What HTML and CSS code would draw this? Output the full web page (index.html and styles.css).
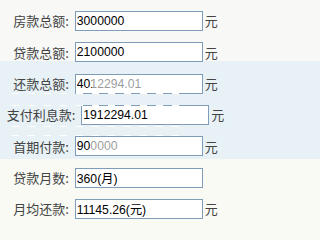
FILE: index.html
```html
<!DOCTYPE html>
<html lang="zh">
<head>
<meta charset="utf-8">
<link rel="stylesheet" href="styles.css">
</head>
<body>
<div class="calc">
  <div class="row"><span class="label">房款总额:</span><input class="field" value="3000000"><span class="unit">元</span></div>
  <div class="row"><span class="label">贷款总额:</span><input class="field" value="2100000"><span class="unit">元</span></div>
  <div class="row"><span class="label">还款总额:</span><input class="field" value="4012294.01"><span class="unit">元</span></div>
  <div class="row"><span class="label">支付利息款:</span><input class="field" value="1912294.01"><span class="unit">元</span></div>
  <div class="row"><span class="label">首期付款:</span><input class="field" value="900000"><span class="unit">元</span></div>
  <div class="row"><span class="label">贷款月数:</span><input class="field" value="360(月)"><span class="unit hidden">元</span></div>
  <div class="row"><span class="label">月均还款:</span><input class="field" value="11145.26(元)"><span class="unit">元</span></div>
  <div class="watermark">
    <div class="dash d1"></div>
    <div class="dash d2"></div>
    <div class="dash d3"></div>
    <div class="dash d4"></div>
    <div class="veil v1"></div>
    <div class="veil v2"></div>
  </div>
</div>
</body>
</html>
```
FILE: styles.css
```css
html, body {
  margin: 0;
  padding: 0;
}
html {
  background: linear-gradient(to bottom, #f8f8f7 0, #f8f8f7 61px, #e8f2f6 61px, #e8f2f6 159px, #fafaf4 159px);
  background-repeat: no-repeat;
  min-height: 100%;
}
body {
  overflow: hidden;
}
.calc {
  position: relative;
  width: 231px;
  height: 229px;
  padding-top: 5.3px;
  box-sizing: border-box;
}
.row {
  display: flex;
  justify-content: center;
  align-items: center;
  height: 31.33px;
}
.label {
  font-family: "Noto Sans CJK SC", "Noto Sans", sans-serif;
  font-size: 13px;
  color: #444;
  white-space: nowrap;
}
.field {
  box-sizing: border-box;
  width: 128px;
  height: 20px;
  margin: 0 2px 0 6px;
  padding: 0 1px;
  border: 1px solid #7f9db9;
  background: #fff;
  font-family: "Liberation Sans", Arial, "Noto Sans CJK SC", sans-serif;
  font-size: 12.2px;
  color: #000;
  outline: none;
}
.unit {
  font-family: "Noto Sans CJK SC", sans-serif;
  font-size: 13px;
  color: #444;
}
.hidden {
  visibility: hidden;
}
.watermark {
  position: absolute;
  left: 0;
  top: 0;
  width: 231px;
  height: 229px;
  pointer-events: none;
}
.dash {
  position: absolute;
  left: 12px;
  width: 170px;
  height: 1px;
  background: repeating-linear-gradient(to right, rgba(255,255,255,1) 0 7px, transparent 7px 16px);
}
.d1 { top: 93px; }
.d2 { top: 105px; }
.d3 { top: 126px; }
.d4 { top: 135px; }
.veil {
  position: absolute;
  background: rgba(255, 255, 255, 0.6);
}
.v1 { left: 92px; top: 76px; width: 58px; height: 15px; }
.v2 { left: 90px; top: 139px; width: 60px; height: 15px; }
```
